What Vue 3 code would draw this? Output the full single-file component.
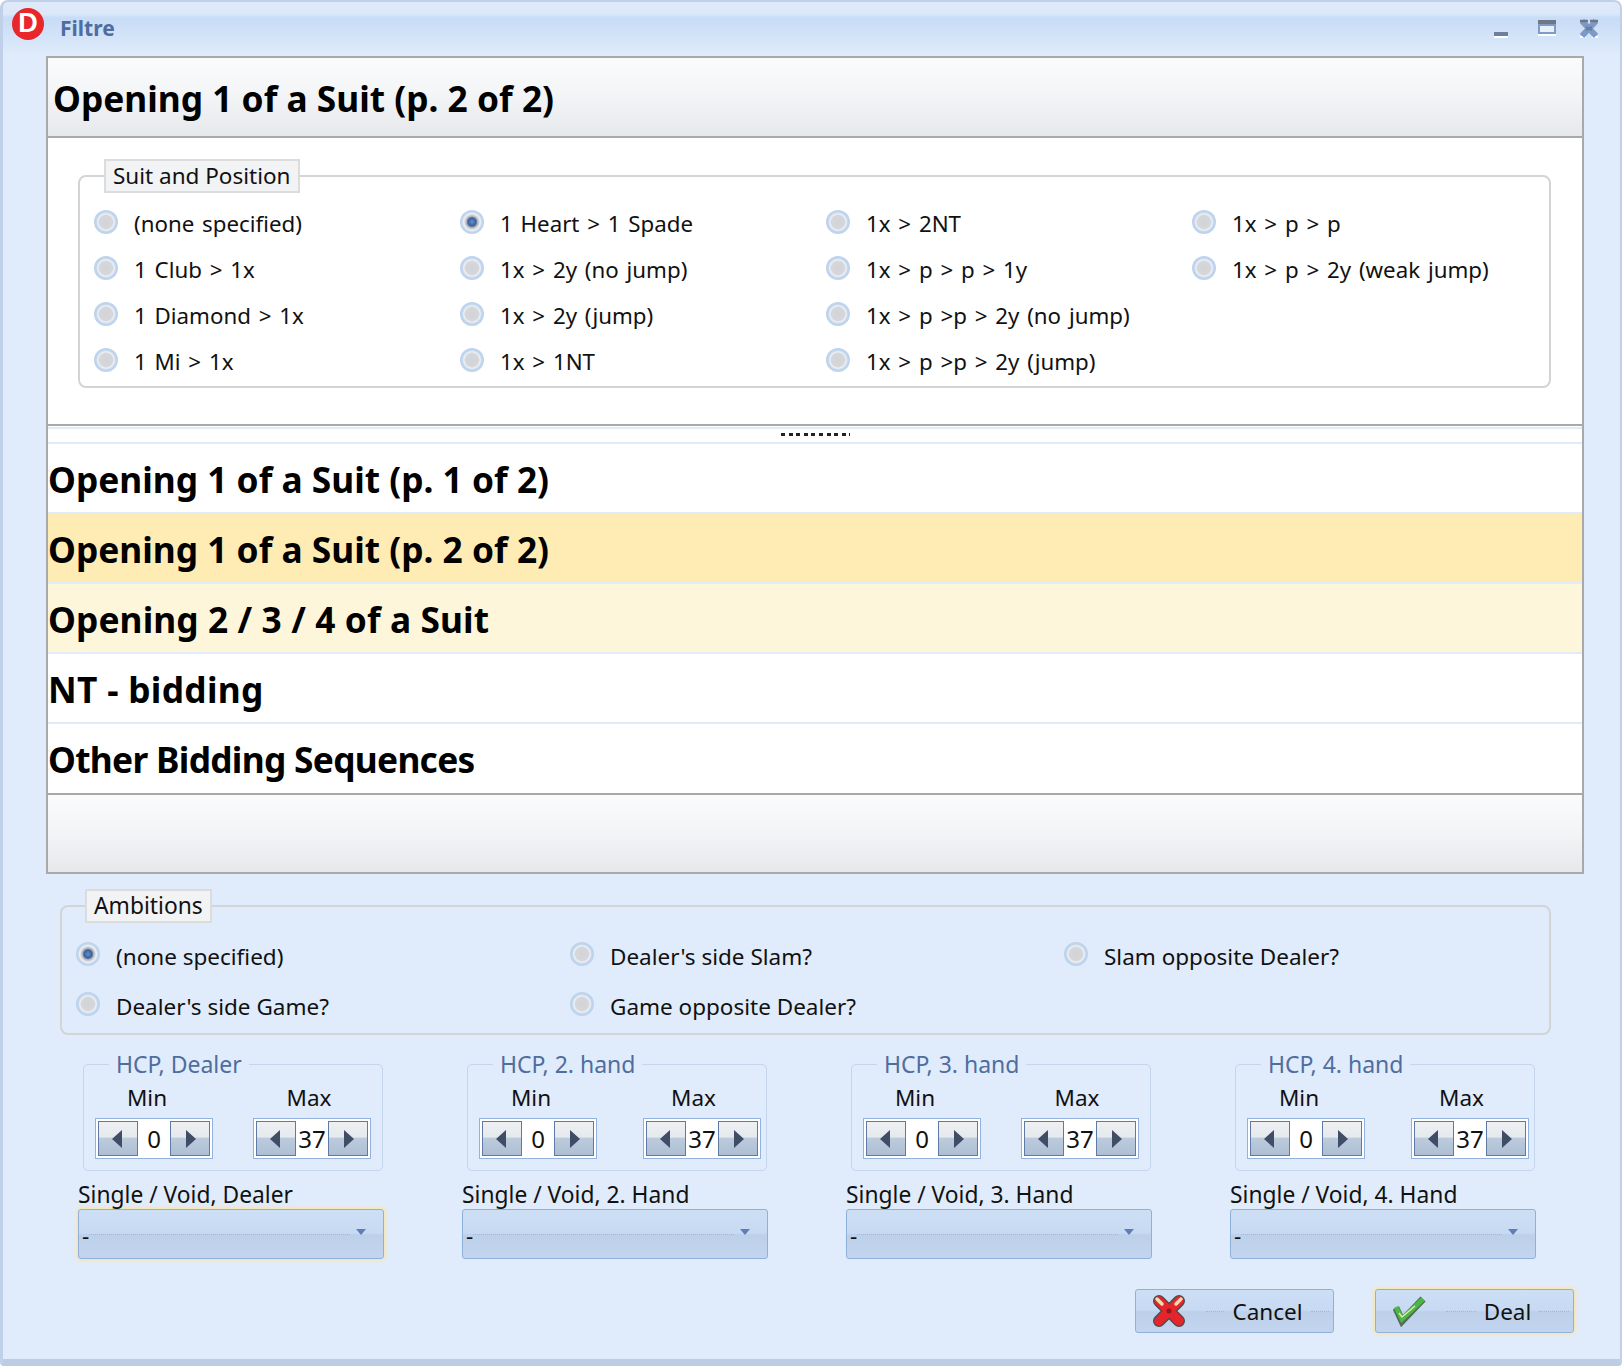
<script setup>
const suitOptions = [
  ["(none specified)", "1 Club > 1x", "1 Diamond > 1x", "1 Mi > 1x"],
  ["1 Heart > 1 Spade", "1x > 2y (no jump)", "1x > 2y (jump)", "1x > 1NT"],
  ["1x > 2NT", "1x > p > p > 1y", "1x > p >p > 2y (no jump)", "1x > p >p > 2y (jump)"],
  ["1x > p > p", "1x > p > 2y (weak jump)"],
];
const suitSelected = "1 Heart > 1 Spade";

const sections = [
  { label: "Opening 1 of a Suit (p. 1 of 2)", cls: "" },
  { label: "Opening 1 of a Suit (p. 2 of 2)", cls: "selected" },
  { label: "Opening 2 / 3 / 4 of a Suit", cls: "hover" },
  { label: "NT - bidding", cls: "wide" },
  { label: "Other Bidding Sequences", cls: "tight" },
];

const ambitions = [
  ["(none specified)", "Dealer's side Game?"],
  ["Dealer's side Slam?", "Game opposite Dealer?"],
  ["Slam opposite Dealer?"],
];

const hands = [
  { hcp: "HCP, Dealer", single: "Single / Void, Dealer", focus: true, even: false },
  { hcp: "HCP, 2. hand", single: "Single / Void, 2. Hand", focus: false, even: true },
  { hcp: "HCP, 3. hand", single: "Single / Void, 3. Hand", focus: false, even: false },
  { hcp: "HCP, 4. hand", single: "Single / Void, 4. Hand", focus: false, even: true },
];
</script>

<template>
  <div class="window">
    <header class="titlebar">
      <div class="logo">D</div>
      <div class="title">Filtre</div>
      <div class="controls">
        <svg width="118" height="24" viewBox="0 0 118 24">
          <rect x="0" y="14" width="14" height="4" fill="#6d7f9c" />
          <rect x="0" y="18" width="14" height="2" fill="#fff" />
          <rect x="44" y="2" width="18" height="14" fill="#7f9cc8" />
          <rect x="44" y="2" width="18" height="4" fill="#6f7785" />
          <rect x="46" y="8" width="14" height="6" fill="#e8f0fb" />
          <rect x="44" y="16" width="18" height="2" fill="#fff" />
          <rect x="86" y="18" width="6" height="2" fill="#fff" />
          <rect x="98" y="18" width="6" height="2" fill="#fff" />
          <path d="M88 3 L102 18 M102 3 L88 18" stroke="#7d99c6" stroke-width="6" />
          <path d="M92 9 L98 12 M98 9 L92 12" stroke="#6a7f9f" stroke-width="2" />
          <path d="M86 3 H94 M96 3 H104" stroke="#6f7785" stroke-width="2.5" />
        </svg>
      </div>
    </header>

    <div class="content">
      <section class="panel">
        <div class="panel-header">Opening 1 of a Suit (p. 2 of 2)</div>
        <div class="panel-body">
          <div class="group suit-group">
            <div class="legend">Suit and Position</div>
            <div class="radio-grid suit-grid">
              <div v-for="(col, i) in suitOptions" :key="i" class="radio-col">
                <div v-for="opt in col" :key="opt" class="radio-row suit-row">
                  <span class="radio" :class="{ on: opt === suitSelected }"></span>
                  <span>{{ opt }}</span>
                </div>
              </div>
            </div>
          </div>
        </div>
        <div class="splitter"><span class="dots"></span></div>
        <div v-for="s in sections" :key="s.label" class="section-row" :class="s.cls">{{ s.label }}</div>
        <div class="panel-footer"></div>
      </section>

      <div class="group ambitions-group">
        <div class="legend ambitions-legend">Ambitions</div>
        <div class="radio-grid amb-grid">
          <div v-for="(col, i) in ambitions" :key="i" class="radio-col">
            <div v-for="opt in col" :key="opt" class="radio-row amb-row">
              <span class="radio" :class="{ on: opt === '(none specified)' }"></span>
              <span>{{ opt }}</span>
            </div>
          </div>
        </div>
      </div>

      <div class="hands">
        <div v-for="h in hands" :key="h.hcp" class="hand" :class="{ even: h.even }">
          <div class="hcp-group">
            <div class="hcp-legend">{{ h.hcp }}</div>
            <div class="hcp-cols">
              <div class="hcp-col">
                <div class="hcp-label">Min</div>
                <div class="spinner">
                  <button class="spin-btn"><span class="tri left"></span></button>
                  <span class="spin-value">0</span>
                  <button class="spin-btn"><span class="tri right"></span></button>
                </div>
              </div>
              <div class="hcp-col max-col">
                <div class="hcp-label">Max</div>
                <div class="spinner">
                  <button class="spin-btn"><span class="tri left"></span></button>
                  <span class="spin-value">37</span>
                  <button class="spin-btn"><span class="tri right"></span></button>
                </div>
              </div>
            </div>
          </div>
          <div class="single-label">{{ h.single }}</div>
          <div class="combo" :class="{ focus: h.focus }">
            <span class="combo-text">-</span>
            <span class="dotted"></span>
            <span class="combo-arrow"></span>
          </div>
        </div>
      </div>

      <div class="actions">
        <button class="action">
          <svg class="action-icon" width="36" height="34" viewBox="0 0 36 34">
            <path d="M9 7 L29 27 M29 7 L9 27" stroke="#4a4a4a" stroke-width="12" stroke-linecap="round" />
            <path d="M9 7 L29 27 M29 7 L9 27" stroke="#e4252c" stroke-width="9.5" stroke-linecap="round" />
            <path d="M7 5 L12 10 M31 5 L26 10" stroke="#f2dcae" stroke-width="3.5" stroke-linecap="round" />
            <circle cx="19" cy="17" r="2.5" fill="#8c1a1f" />
          </svg>
          <span class="dotted"></span>
          <span class="action-text">Cancel</span>
          <span class="dotted"></span>
        </button>
        <button class="action focus">
          <svg class="action-icon" width="36" height="34" viewBox="0 0 36 34">
            <path d="M6 14 L12 27 L33 5" fill="none" stroke="#566a58" stroke-width="7" />
            <path d="M6 13 L12 25 L33 5" fill="none" stroke="#4cb648" stroke-width="5" />
            <path d="M9 19 L12 23 L25 12" fill="none" stroke="#dcecA6" stroke-width="1.5" />
          </svg>
          <span class="dotted"></span>
          <span class="action-text">Deal</span>
          <span class="dotted"></span>
        </button>
      </div>
    </div>
  </div>
</template>

<style>
html,
body {
  margin: 0;
  background: #fff;
}
</style>

<style scoped>
.window {
  width: 1622px;
  height: 1366px;
  box-sizing: border-box;
  background: #e0ecfb;
  border: solid #c0d0e8;
  border-width: 2px 2px 0 3px;
  border-bottom: 7px solid #bccde4;
  border-radius: 8px 8px 4px 4px;
  font-family: "Noto Sans", "Open Sans", sans-serif;
  font-size: 22.5px;
  color: #111;
  overflow: hidden;
}

.titlebar {
  height: 54px;
  display: flex;
  align-items: flex-start;
  background: linear-gradient(#dfeafa 0, #dbe8f9 12px, #c7dcf6 16px, #d3e3f8 34px, #e0ecfb 54px);
}

.logo {
  width: 32px;
  height: 32px;
  margin: 6px 16px 0 9px;
  border-radius: 50%;
  background: #e8262c;
  color: #fff;
  font: bold 27px/31px "Liberation Sans", sans-serif;
  text-align: center;
}

.title {
  margin-top: 12px;
  font-size: 21px;
  font-weight: bold;
  line-height: 29px;
  color: #4f6d9e;
}

.controls {
  margin-left: auto;
  margin-top: 16px;
  margin-right: 8px;
  height: 24px;
}

.content {
  padding-left: 43px;
  padding-right: 36px;
}

.panel {
  height: 818px;
  box-sizing: border-box;
  border: 2px solid #a9a9a9;
  background: #fff;
  display: flex;
  flex-direction: column;
}

.panel-header {
  height: 80px;
  box-sizing: border-box;
  padding: 3px 0 0 5px;
  border-bottom: 2px solid #a9a9a9;
  background: linear-gradient(#fafbfc, #f4f5f7 45%, #e6e8ec);
  font-size: 35.3px;
  font-weight: bold;
  line-height: 74px;
  color: #000;
}

.panel-body {
  height: 288px;
  box-sizing: border-box;
  padding: 37px 31px 0 30px;
  border-bottom: 2px solid #a9a9a9;
}

.group {
  position: relative;
  box-sizing: border-box;
  border: 2px solid #d2d4d6;
  border-radius: 8px;
}

.suit-group {
  height: 213px;
  padding: 23px 0 0 14px;
  font-size: 22.3px;
  word-spacing: 2px;
}

.legend {
  position: absolute;
  left: 24px;
  top: -18px;
  height: 34px;
  box-sizing: border-box;
  padding: 0 7px;
  border: 2px solid #dcdcdc;
  background: #f2f3f4;
  font-size: 22.5px;
  word-spacing: 0;
  line-height: 30px;
}

.radio-grid {
  display: grid;
}

.suit-grid {
  grid-template-columns: repeat(4, 366px);
}

.radio-row {
  display: flex;
  align-items: center;
  gap: 16px;
  white-space: nowrap;
}

.suit-row {
  height: 46px;
}

.radio {
  flex: none;
  width: 24px;
  height: 24px;
  border-radius: 50%;
  background: radial-gradient(closest-side, #d2d3d6 0, #d6d7da 55%, #eef1f5 68%, #c0d5ee 82%, #bcd2ec 100%);
  position: relative;
  top: -1px;
}

.radio.on {
  background: radial-gradient(closest-side, #5f8fd8 0, #3c5e96 34%, #aab0ba 46%, #dcdfe4 62%, #eef1f5 70%, #c0d5ee 84%, #bcd2ec 100%);
}

.amb-row .radio {
  top: -2px;
}

.splitter {
  height: 15px;
  box-sizing: border-box;
  margin-top: 1px;
  border-top: 2px solid #e1ecfb;
  display: flex;
  justify-content: center;
  padding-top: 4px;
}

.dots {
  width: 69px;
  height: 3px;
  background: repeating-linear-gradient(90deg, #222 0, #222 4px, transparent 4px, transparent 7.6px);
}

.section-row {
  height: 70px;
  box-sizing: border-box;
  border-top: 2px solid #e1ecfb;
  font-size: 35.3px;
  font-weight: bold;
  line-height: 70px;
  color: #000;
}

.section-row.selected {
  background: #ffecb5;
}

.section-row.hover {
  background: #fef6da;
  letter-spacing: 0.1px;
}

.section-row.wide {
  letter-spacing: 0.3px;
}

.section-row.tight {
  height: 71px;
  letter-spacing: -0.7px;
}

.panel-footer {
  flex: 1;
  border-top: 2px solid #a9a9a9;
  background: linear-gradient(#fafbfc, #f4f5f7 45%, #e6e8ec);
}

.ambitions-group {
  margin: 31px 33px 0 14px;
  height: 130px;
  padding: 24px 0 0 14px;
  font-size: 22.5px;
}

.ambitions-legend {
  left: 23px;
  font-size: 22.8px;
}

.amb-grid {
  grid-template-columns: repeat(3, 494px);
}

.amb-row {
  height: 50px;
}

.hands {
  margin-top: 29px;
  margin-left: 32px;
  display: grid;
  grid-template-columns: repeat(4, 384px);
}

.hand {
  width: 306px;
}

.hcp-group {
  position: relative;
  margin-left: 5px;
  width: 300px;
  height: 107px;
  box-sizing: border-box;
  border: 1px solid #c4d5ec;
  border-radius: 5px;
  padding: 13px 11px 0;
}

.hcp-legend {
  position: absolute;
  top: -16px;
  left: 25px;
  padding: 0 7px;
  background: #e0ecfb;
  color: #4f6d9e;
  font-size: 23px;
  line-height: 30px;
}

.hcp-cols {
  display: flex;
  justify-content: space-between;
}

.even .hcp-cols {
  margin-right: -6px;
}

.hcp-col {
  width: 118px;
}

.hcp-label {
  height: 40px;
  line-height: 40px;
  text-align: center;
  box-sizing: border-box;
  padding-right: 14px;
}

.max-col .hcp-label {
  padding-right: 6px;
}

.even .max-col .hcp-label {
  padding-right: 17px;
}

.spinner {
  height: 41px;
  box-sizing: border-box;
  border: 1px solid #94b2df;
  background: #fff;
  padding: 2px;
  display: flex;
  align-items: stretch;
}

.spin-btn {
  width: 40px;
  padding: 0;
  flex: none;
  box-sizing: border-box;
  border: 1px solid #5e7aa6;
  background: linear-gradient(#eef0f3 0, #e6e9ed 45%, #bccbdc 50%, #aebfd4 100%);
  display: flex;
  align-items: center;
  justify-content: center;
}

.tri {
  width: 0;
  height: 0;
  border-top: 9px solid transparent;
  border-bottom: 9px solid transparent;
}

.tri.left {
  border-right: 10px solid #3f4d66;
  margin-right: 2px;
}

.tri.right {
  border-left: 10px solid #3f4d66;
  margin-left: 2px;
}

.spin-value {
  flex: 1;
  text-align: center;
  font-size: 24px;
  line-height: 35px;
}

.single-label {
  margin-top: 10px;
  height: 28px;
  font-size: 22.8px;
  line-height: 28px;
  white-space: nowrap;
}

.combo {
  height: 50px;
  box-sizing: border-box;
  border: 1px solid #8fb0dc;
  border-radius: 3px;
  background: linear-gradient(#cddff5, #c7daf3 48%, #bdd0ea 52%, #c3d5ee);
  display: flex;
  align-items: center;
  padding: 0 17px 0 3px;
}

.combo.focus,
.action.focus {
  box-shadow: 0 0 3px 2px #f6e6b8;
}

.combo-text {
  margin-top: 4px;
  line-height: 32px;
}

.dotted {
  flex: 1;
  height: 0;
  border-top: 1px dotted #9db8e0;
}

.combo-arrow {
  width: 0;
  height: 0;
  margin: 0 0 4px 6px;
  border-left: 5px solid transparent;
  border-right: 5px solid transparent;
  border-top: 6px solid #5f7fb5;
}

.actions {
  margin-top: 30px;
  margin-right: 10px;
  display: flex;
  justify-content: flex-end;
  gap: 41px;
}

.action {
  width: 199px;
  height: 44px;
  padding: 0 4px 0 14px;
  box-sizing: border-box;
  border: 1px solid #8fb0dc;
  border-radius: 3px;
  background: linear-gradient(#cddff5, #c7daf3 48%, #bdd0ea 52%, #c3d5ee);
  display: flex;
  align-items: center;
  font: inherit;
  color: #111;
}

.action-icon {
  flex: none;
  margin-right: 20px;
}

.action-text {
  margin: 0 8px;
}
</style>
